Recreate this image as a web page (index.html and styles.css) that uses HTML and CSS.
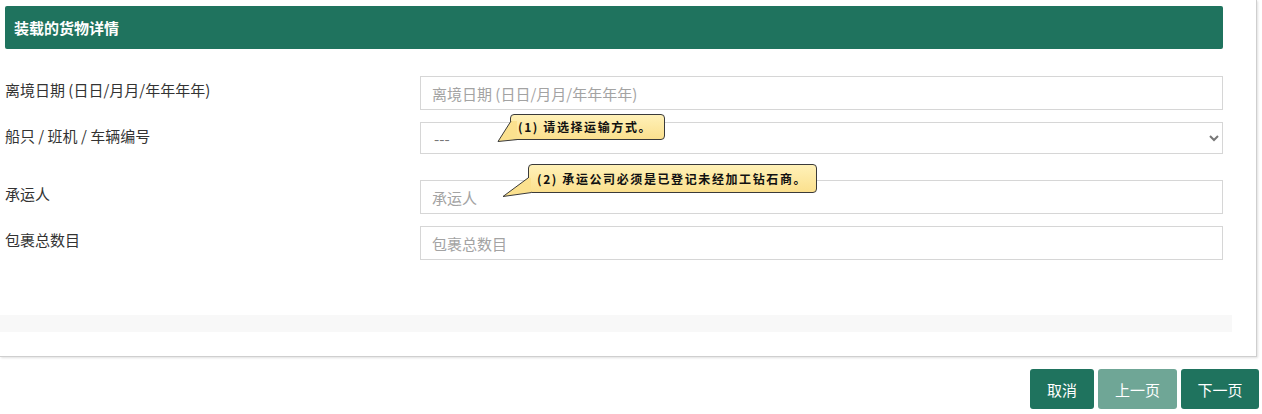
FILE: index.html
```html
<!DOCTYPE html>
<html lang="zh">
<head>
<meta charset="utf-8">
<title>装载的货物详情</title>
<link rel="stylesheet" href="styles.css">
</head>
<body>
<div class="panel">
  <div class="panel-head">装载的货物详情</div>
  <div class="form">
    <div class="row">
      <label class="label">离境日期 (日日/月月/年年年年)</label>
      <div class="field"><input class="input" type="text" placeholder="离境日期 (日日/月月/年年年年)"></div>
    </div>
    <div class="row">
      <label class="label">船只 / 班机 / 车辆编号</label>
      <div class="field">
        <select class="input select"><option>---</option></select>
        <div class="tip tip-1">
          <svg class="tail" width="24" height="32" viewBox="0 0 24 32"><polygon points="15,7 2,27.5 21,25.6 21,7" class="tail-fill"/><polyline points="15,7 2,27.5 21,25.6" class="tail-line"/></svg>
          <span class="tip-text">(1) 请选择运输方式。</span>
        </div>
      </div>
    </div>
    <div class="row row-gap">
      <label class="label">承运人</label>
      <div class="field">
        <input class="input" type="text" placeholder="承运人">
        <div class="tip tip-2">
          <svg class="tail tail-2" width="32" height="36" viewBox="0 0 32 36"><polygon points="28,14 3,32.5 31,28.6 31,14" class="tail-fill"/><polyline points="28,14 3,32.5 31,28.6" class="tail-line"/></svg>
          <span class="tip-text">(2) 承运公司必须是已登记未经加工钻石商。</span>
        </div>
      </div>
    </div>
    <div class="row">
      <label class="label">包裹总数目</label>
      <div class="field"><input class="input" type="text" placeholder="包裹总数目"></div>
    </div>
  </div>
  <div class="band"></div>
</div>
<div class="actions">
  <button class="btn">取消</button>
  <button class="btn btn-light">上一页</button>
  <button class="btn">下一页</button>
</div>
</body>
</html>
```

FILE: styles.css
```css
* { box-sizing: border-box; }
html, body { margin: 0; padding: 0; background: #fff; }
body {
  font-family: "Noto Sans CJK SC", "Noto Sans", sans-serif;
  font-size: 15px;
  color: #333;
  width: 1262px;
  height: 414px;
  overflow: hidden;
}
.panel {
  width: 1257px;
  height: 357px;
  background: #fff;
  border-right: 1px solid #cfcfcf;
  border-bottom: 1px solid #cfcfcf;
  box-shadow: 1px 1px 2px rgba(0,0,0,0.12);
  padding-top: 6px;
  display: flex;
  flex-direction: column;
}
.panel-head {
  margin: 0 33px 0 5px;
  height: 43px;
  background: #1f735e;
  color: #fff;
  font-weight: 700;
  font-size: 15px;
  line-height: 43px;
  padding-left: 9px;
  border-radius: 2px;
}
.form {
  margin-top: 27px;
  padding: 0 33px 0 5px;
  display: flex;
  flex-direction: column;
  gap: 12px;
}
.row {
  display: grid;
  grid-template-columns: 415px 1fr;
}
.row-gap { margin-top: 14px; }
.label {
  padding-top: 4px;
  line-height: 20px;
  font-size: 15px;
  color: #333;
}
.field { position: relative; }
.input {
  display: block;
  width: 100%;
  height: 34px;
  border: 1px solid #d6d6d6;
  border-radius: 0;
  padding: 0 11px;
  font-family: "Noto Sans CJK SC", "Noto Sans", sans-serif;
  font-size: 15px;
  color: #555;
  background: #fff;
  outline: none;
}
.input::placeholder { color: #a3a3a3; }
.select { height: 32px; color: #777; padding-left: 9px; }
.tip {
  position: absolute;
  height: 26px;
  border: 1px solid #3a3a3a;
  border-radius: 4px;
  background: linear-gradient(#fff1b8, #fbe08e);
  color: #111;
  font-size: 12px;
  font-weight: 700;
  letter-spacing: 1.6px;
  line-height: 24px;
  padding-left: 7px;
  white-space: nowrap;
  z-index: 2;
}
.tip-1 { left: 90px; top: -8px; width: 155px; }
.tip-2 { left: 108px; top: -16px; width: 289px; height: 29px; line-height: 27px; padding-left: 8px; }
.tail { position: absolute; left: -15px; top: -1px; overflow: visible; }
.tail-2 { left: -29px; }
.tail-fill { fill: #fbe18f; }
.tail-line { fill: none; stroke: #3a3a3a; stroke-width: 1; }
.tip-text { position: relative; }
.band {
  margin-top: 55px;
  width: 1232px;
  height: 17px;
  background: #f8f8f8;
}
.actions {
  display: flex;
  justify-content: flex-end;
  gap: 4px;
  padding: 12px 3px 0 0;
}
.btn {
  height: 40px;
  border: none;
  border-radius: 3px;
  background: #1f735e;
  color: #fff;
  font-family: "Noto Sans CJK SC", "Noto Sans", sans-serif;
  font-size: 15px;
  padding: 0;
  width: 64px;
}
.btn-light { background: #6fa696; width: 79px; }
.btn:last-child { width: 78px; }
```
